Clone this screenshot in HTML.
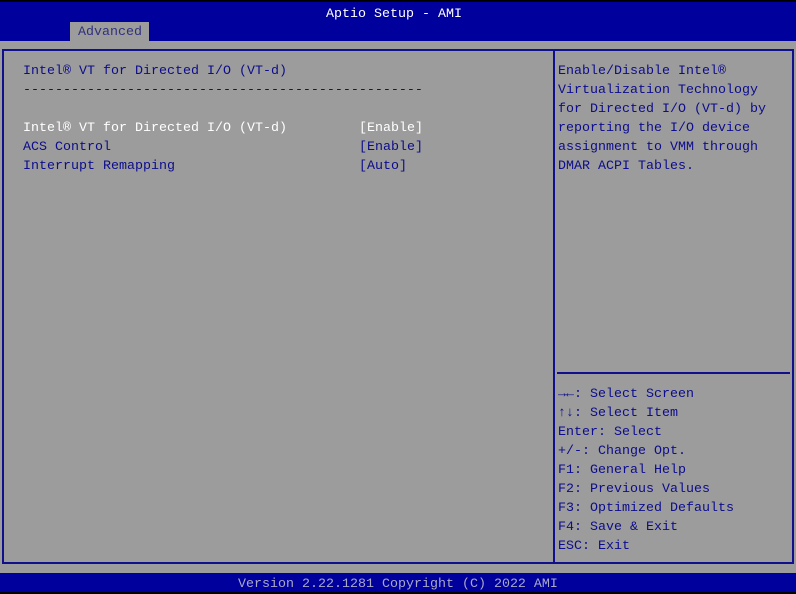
<!DOCTYPE html>
<html><head><meta charset="utf-8"><style>
*{margin:0;padding:0;box-sizing:border-box}
body{width:796px;height:594px;background:#9c9c9c;position:relative;overflow:hidden;font-family:"Liberation Mono","DejaVu Sans Mono",monospace;font-size:13.33px;color:#0c0c8c}
.t{position:absolute;white-space:pre;line-height:19px}
#top{position:absolute;left:0;top:0;width:796px;height:41px;background:#00009c;border-top:2px solid #000}
#tab{position:absolute;left:70px;top:22px;width:79px;height:19px;background:#9c9c9c}
#bot{position:absolute;left:0;top:573px;width:796px;height:21px;background:#00009c;border-bottom:2px solid #000}
#panel{position:absolute;left:2px;top:49px;width:792px;height:515px;border:2px solid #10108c}
#div{position:absolute;left:553px;top:49px;width:2px;height:515px;background:#10108c}
#hr{position:absolute;left:557px;top:372px;width:233px;height:2px;background:#10108c}
.w{color:#fff}
</style></head><body>
<div id="top"></div>
<div id="tab"></div>
<div class="t w" style="left:326px;top:5px">Aptio Setup - AMI</div>
<div class="t" style="left:78px;top:23px;color:#30307c">Advanced</div>
<div id="panel"></div>
<div id="div"></div>
<div id="hr"></div>
<div class="t" style="left:23px;top:62px">Intel® VT for Directed I/O (VT-d)</div>
<div class="t" style="left:23px;top:81px">--------------------------------------------------</div>
<div class="t w" style="left:23px;top:119px">Intel® VT for Directed I/O (VT-d)</div>
<div class="t w" style="left:359px;top:119px">[Enable]</div>
<div class="t" style="left:23px;top:138px">ACS Control</div>
<div class="t" style="left:359px;top:138px">[Enable]</div>
<div class="t" style="left:23px;top:157px">Interrupt Remapping</div>
<div class="t" style="left:359px;top:157px">[Auto]</div>
<div class="t" style="left:558px;top:62px">Enable/Disable Intel®
Virtualization Technology
for Directed I/O (VT-d) by
reporting the I/O device
assignment to VMM through
DMAR ACPI Tables.</div>
<div class="t" style="left:558px;top:385px"><b>→←</b>: Select Screen
<b>↑↓</b>: Select Item
Enter: Select
+/-: Change Opt.
F1: General Help
F2: Previous Values
F3: Optimized Defaults
F4: Save &amp; Exit
ESC: Exit</div>
<div id="bot"></div>
<div class="t" style="left:238px;top:575px;color:#a8a8c8">Version 2.22.1281 Copyright (C) 2022 AMI</div>
</body></html>
